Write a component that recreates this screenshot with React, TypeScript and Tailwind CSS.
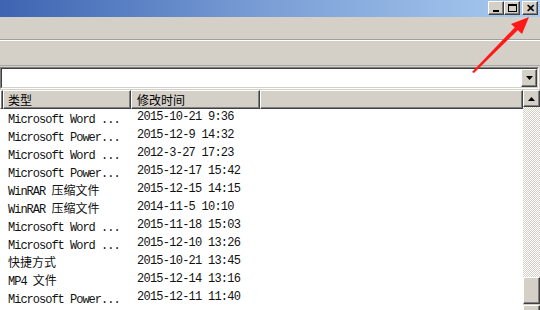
import React from "react";

const ROWS: [string, string][] = [
  ["Microsoft Word ...", "2015-10-21 9:36"],
  ["Microsoft Power...", "2015-12-9 14:32"],
  ["Microsoft Word ...", "2012-3-27 17:23"],
  ["Microsoft Power...", "2015-12-17 15:42"],
  ["WinRAR |压缩文件", "2015-12-15 14:15"],
  ["WinRAR |压缩文件", "2014-11-5 10:10"],
  ["Microsoft Word ...", "2015-11-18 15:03"],
  ["Microsoft Word ...", "2015-12-10 13:26"],
  ["|快捷方式", "2015-10-21 13:45"],
  ["MP4 |文件", "2015-12-14 13:16"],
  ["Microsoft Power...", "2015-12-11 11:40"],
];

const mono = "font-['Liberation_Mono','Noto_Sans_CJK_SC',monospace]";
const cjk = "font-['Noto_Sans_CJK_SC',sans-serif]";
const raised =
  "bg-[#d4d0c8] border border-t-white border-l-white border-r-[#404040] border-b-[#404040] shadow-[inset_-1px_-1px_0_#808080]";

function TypeCell({ text }: { text: string }) {
  const [latin, han] = text.split("|");
  return (
    <span className="whitespace-pre">
      <span className={`${mono} text-[12px] tracking-[-1px]`}>{latin}</span>
      {han && <span className={`${cjk} text-[12px]`}>{han}</span>}
    </span>
  );
}

function TitleButton({ children }: { children: React.ReactNode }) {
  return <div className={`${raised} w-[16px] h-[14px] flex items-center justify-center`}>{children}</div>;
}

export default function App() {
  return (
    <div className="relative w-[540px] h-[310px] overflow-hidden bg-[#d4d0c8] select-none">
      {/* 标题栏 */}
      <div className="h-[17px] bg-gradient-to-r from-[#3e64b2] via-[#7b9fd6] to-[#a9cbf0] flex items-start justify-end pt-px pr-[2px]">
        <div className="flex">
          <TitleButton>
            <div className="w-[6px] h-[2px] bg-black mt-[6px]" />
          </TitleButton>
          <TitleButton>
            <div className="w-[9px] h-[8px] border border-black border-t-2" />
          </TitleButton>
        </div>
        <div className="ml-[2px]">
          <TitleButton>
            <span className="text-[11px] leading-none font-bold font-['Liberation_Sans',sans-serif]">✕</span>
          </TitleButton>
        </div>
      </div>

      {/* 菜单栏 */}
      <div className="h-[23px] border-b border-b-[#a0a0a0] shadow-[0_1px_0_#fff]" />

      {/* 工具栏 */}
      <div className="h-[25px] mt-px border-b border-b-[#a8a8a8]" />

      {/* 地址栏 */}
      <div className="h-[23px] pt-px">
        <div className="h-[22px] mr-[1px] border border-t-[#808080] border-l-[#808080] border-r-white border-b-white">
          <div className="h-full border border-t-[#404040] border-l-[#404040] border-r-[#d4d0c8] border-b-[#d4d0c8] bg-white flex justify-end">
            <div className={`${raised} w-[16px] h-full flex items-center justify-center`}>
              <svg width="7" height="4" viewBox="0 0 7 4">
                <path d="M0 0h7L3.5 4z" fill="#000" />
              </svg>
            </div>
          </div>
        </div>
      </div>

      {/* 列表 */}
      <div className="flex h-[232px] mt-px">
        <div className="flex-1 bg-white flex flex-col">
          <div className="h-[19px] flex shrink-0">
            <div className={`${raised} w-[3px] h-full`} />
            <div className={`${raised} w-[128px] h-full flex items-center pl-[4px] ${cjk} text-[12px] text-black`}>类型</div>
            <div className={`${raised} w-[129px] h-full flex items-center pl-[5px] ${cjk} text-[12px] text-black`}>修改时间</div>
            <div className={`${raised} flex-1 h-full`} />
          </div>
          {ROWS.map(([t, d], i) => (
            <div key={i} className="h-[18px] flex items-center shrink-0 text-[#111] pb-[2px]">
              <div className="w-[137px] pl-[8px] leading-none">
                <TypeCell text={t} />
              </div>
              <div className={`${mono} text-[12px] tracking-[-0.75px] whitespace-pre`}>{d}</div>
            </div>
          ))}
        </div>

        {/* 滚动条 */}
        <div className="w-[17px] flex flex-col">
          <div className={`${raised} h-[17px] flex items-center justify-center shrink-0`}>
            <svg width="7" height="4" viewBox="0 0 7 4">
              <path d="M3.5 0L7 4H0z" fill="#000" />
            </svg>
          </div>
          <div className="flex-1 bg-[repeating-conic-gradient(#d4d0c8_0_25%,#ffffff_0_50%)] bg-[length:2px_2px]" />
          <div className={`${raised} h-[27px] shrink-0`} />
          <div className={`${raised} h-[17px] mt-px shrink-0 flex items-center justify-center`}>
            <svg width="7" height="4" viewBox="0 0 7 4">
              <path d="M0 0h7L3.5 4z" fill="#000" />
            </svg>
          </div>
        </div>
      </div>

      {/* 红色箭头 */}
      <svg className="absolute left-0 top-0 pointer-events-none" width="540" height="310">
        <path d="M472 72 L474 73 L520 28 L517 25 Z" fill="#ff1a1a" />
        <path d="M529 17 L511 24 L522 34 Z" fill="#ff1a1a" />
      </svg>
    </div>
  );
}
